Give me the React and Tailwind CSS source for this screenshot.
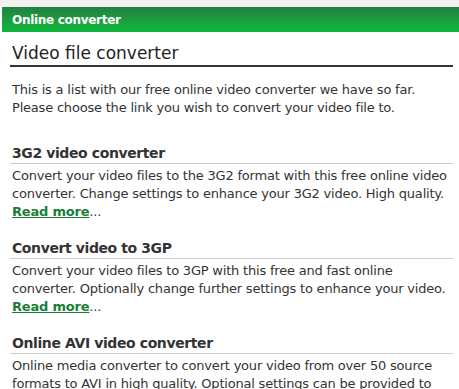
export default function App() {
  const sections = [
    {
      title: "3G2 video converter",
      body: "Convert your video files to the 3G2 format with this free online video converter. Change settings to enhance your 3G2 video. High quality.",
    },
    {
      title: "Convert video to 3GP",
      body: "Convert your video files to 3GP with this free and fast online converter. Optionally change further settings to enhance your video.",
    },
    {
      title: "Online AVI video converter",
      body: "Online media converter to convert your video from over 50 source formats to AVI in high quality. Optional settings can be provided to enhance your video.",
    },
  ];
  return (
    <div
      className="w-[459px] h-[389px] overflow-hidden bg-white text-[#333333]"
      style={{ fontFamily: '"DejaVu Sans", Verdana, sans-serif' }}
    >
      <div className="h-[7px] bg-[#f0f0f0]" />
      <div className="ml-[2px] h-[25px] bg-gradient-to-b from-[#21803f] to-[#0bb83c] flex items-center pl-[10px] text-white font-bold text-[12px] tracking-[-0.3px]">
        Online converter
      </div>
      <div className="ml-[10px] w-[443px]">
        <div className="mt-[10px] pl-[2px] border-b-2 border-[#333333] text-[17px] leading-[22px] pb-[1px] text-[#222222]">
          Video file converter
        </div>
        <p className="mt-[14px] pl-[2px] text-[13px] leading-[18px] tracking-[-0.2px]">
          This is a list with our free online video converter we have so far.
          <br />
          Please choose the link you wish to convert your video file to.
        </p>
        {sections.map((s, i) => (
          <div key={i} className={i === 0 ? "mt-[26px]" : "mt-[17px]"}>
            <div className="pl-[2px] border-b border-[#cccccc] text-[14px] tracking-[-0.4px] font-bold leading-[20px]">
              {s.title}
            </div>
            <p className="mt-[3px] pl-[2px] text-[13px] leading-[18px] tracking-[-0.2px]">
              {s.body}
              <br />
              <a href="#" className="font-bold text-[#1b7d39] underline">
                Read more
              </a>
              ...
            </p>
          </div>
        ))}
      </div>
    </div>
  );
}
